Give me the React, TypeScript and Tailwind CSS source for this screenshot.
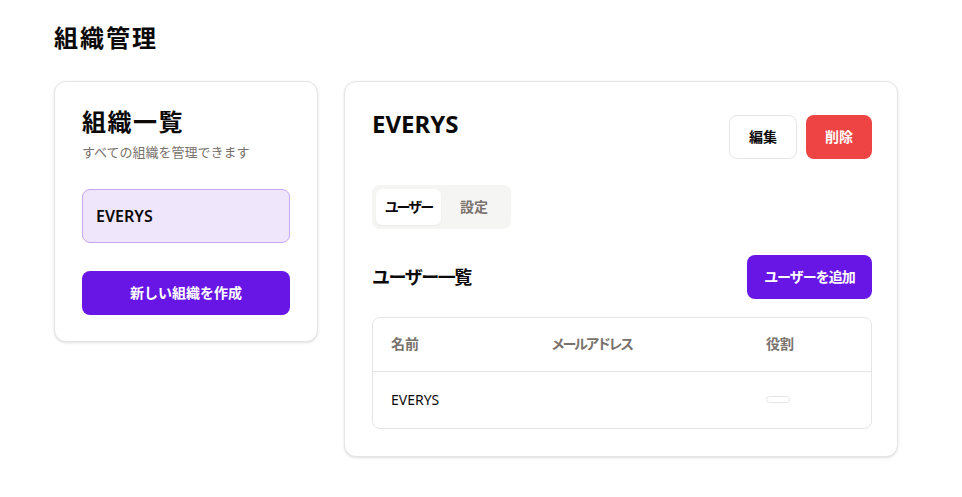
const font = { fontFamily: '"Noto Sans", "Noto Sans CJK JP", sans-serif' };

const OrgList = () => (
    <div className="w-[264px] rounded-xl border border-[#e7e5e4] bg-white px-[27px] pt-[24px] pb-[26px] shadow-sm">
        <h2 className="text-2xl font-bold leading-8 tracking-[1.5px] text-[#0c0a09]">組織一覧</h2>
        <p className="mt-[4px] text-[13px] leading-5 text-[#78716c]">すべての組織を管理できます</p>
        <div className="mt-[27px] flex h-[54px] items-center rounded-lg border border-[#c4a8f5] bg-[#efe6fb] px-[13px] text-base font-semibold text-[#0c0a09]">
            EVERYS
        </div>
        <button className="mt-[28px] h-[44px] w-full rounded-lg bg-[#6816e6] text-sm font-bold text-white">
            新しい組織を作成
        </button>
    </div>
);

const OrgDetail = () => (
    <div className="flex-1 rounded-xl border border-[#e7e5e4] bg-white pl-[27px] pr-[25px] pt-[26px] pb-[27px] shadow-sm">
        <div className="flex items-start justify-between">
            <h2 className="text-2xl font-bold leading-8 text-[#0c0a09]">EVERYS</h2>
            <div className="mt-[7px] flex gap-[9px]">
                <button className="h-[44px] w-[68px] rounded-lg border border-[#e7e5e4] bg-white text-sm font-semibold text-[#0c0a09]">
                    編集
                </button>
                <button className="h-[44px] w-[66px] rounded-lg bg-[#ef4444] text-sm font-semibold text-white">
                    削除
                </button>
            </div>
        </div>

        <div className="mt-[26px] inline-flex rounded-lg bg-[#f5f5f4] p-1">
            <button className="h-[36px] w-[65px] rounded-md bg-white text-sm font-semibold tracking-[-2px] text-[#0c0a09] shadow-xs">
                ユーザー
            </button>
            <button className="h-[36px] w-[66px] text-sm font-semibold text-[#78716c]">設定</button>
        </div>

        <div className="mt-[26px] flex items-center justify-between">
            <h3 className="text-lg font-bold tracking-[-1.5px] text-[#0c0a09]">ユーザー一覧</h3>
            <button className="h-[44px] w-[125px] rounded-lg bg-[#6816e6] text-sm font-bold tracking-[-1px] text-white">
                ユーザーを追加
            </button>
        </div>

        <div className="mt-[18px] overflow-hidden rounded-lg border border-[#e7e5e4]">
            <table className="w-full text-left text-sm">
                <thead>
                    <tr className="h-[53px] border-b border-[#e7e5e4] text-[#78716c]">
                        <th className="w-[178px] pl-[18px] font-semibold">名前</th>
                        <th className="w-[215px] font-semibold tracking-[-2.5px]">メールアドレス</th>
                        <th className="font-semibold">役割</th>
                    </tr>
                </thead>
                <tbody>
                    <tr className="h-[57px] text-[#0c0a09]">
                        <td className="pl-[18px]">EVERYS</td>
                        <td></td>
                        <td>
                            <span className="block h-[7px] w-[24px] rounded-full border border-[#e7e5e4]" />
                        </td>
                    </tr>
                </tbody>
            </table>
        </div>
    </div>
);

export default function App() {
    return (
        <div className="min-h-screen bg-white pl-[54px] pr-[64px] pt-[22px]" style={font}>
            <h1 className="text-2xl font-bold leading-8 tracking-[2px] text-[#0c0a09]">組織管理</h1>
            <div className="mt-[27px] flex items-start gap-[26px]">
                <OrgList />
                <OrgDetail />
            </div>
        </div>
    );
}
